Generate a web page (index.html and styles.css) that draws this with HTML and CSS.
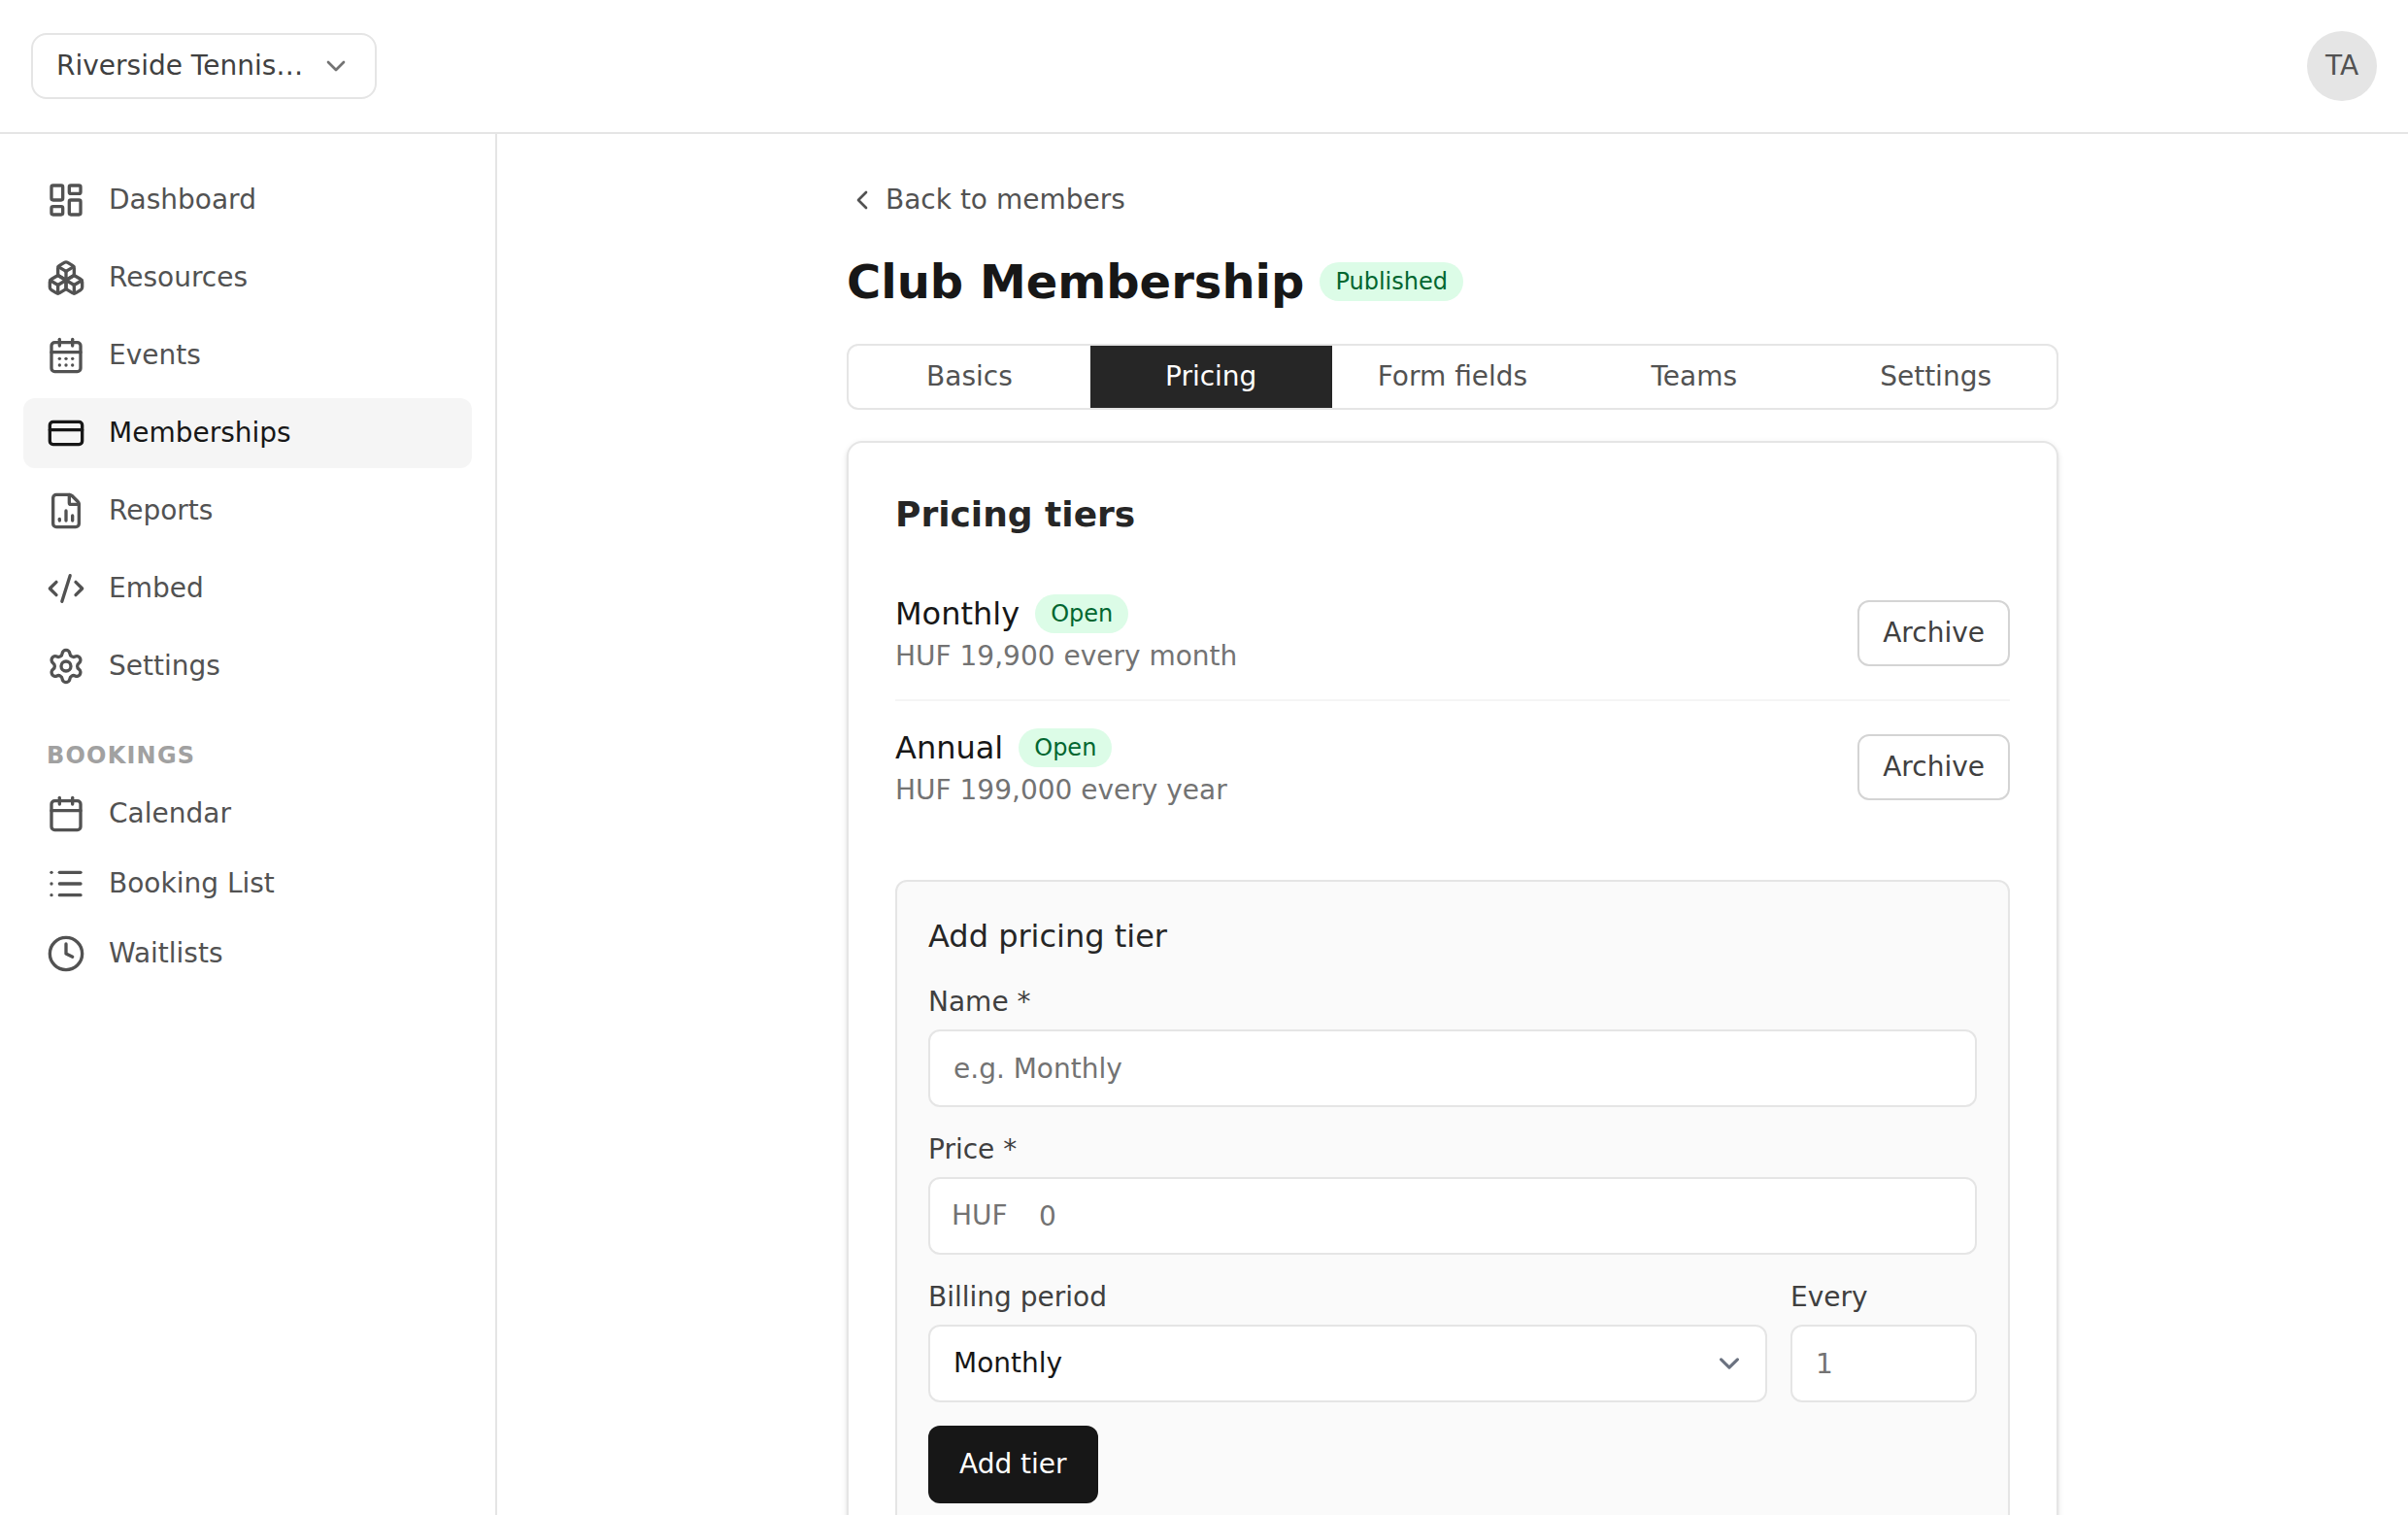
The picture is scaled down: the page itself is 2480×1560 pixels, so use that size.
FILE: index.html
```html
<!DOCTYPE html>
<html lang="en">
<head>
    <meta charset="UTF-8">
    <meta name="viewport" content="width=device-width, initial-scale=1.0">
    <title>Club Membership</title>
    <link rel="stylesheet" href="styles.css">
</head>
<body>
    <header class="topbar">
        <button type="button" class="org-switcher">
            <span class="org-name">Riverside Tennis…</span>
            <svg class="icon icon-sm" viewBox="0 0 24 24" aria-hidden="true"><path d="m6 9 6 6 6-6"/></svg>
        </button>
        <button type="button" class="avatar">TA</button>
    </header>

    <div class="layout">
        <aside class="sidebar">
            <nav class="nav">
                <a href="#" class="nav-item">
                    <svg class="icon" viewBox="0 0 24 24" aria-hidden="true"><rect width="7" height="9" x="3" y="3" rx="1"/><rect width="7" height="5" x="14" y="3" rx="1"/><rect width="7" height="9" x="14" y="12" rx="1"/><rect width="7" height="5" x="3" y="16" rx="1"/></svg>
                    Dashboard
                </a>
                <a href="#" class="nav-item">
                    <svg class="icon" viewBox="0 0 24 24" aria-hidden="true"><path d="M2.97 12.92A2 2 0 0 0 2 14.63v3.24a2 2 0 0 0 .97 1.71l3 1.8a2 2 0 0 0 2.06 0L12 19v-5.5l-5-3-4.03 2.42Z"/><path d="m7 16.5-4.74-2.85"/><path d="m7 16.5 5-3"/><path d="M7 16.5v5.17"/><path d="M12 13.5V19l3.97 2.38a2 2 0 0 0 2.06 0l3-1.8a2 2 0 0 0 .97-1.71v-3.24a2 2 0 0 0-.97-1.71L17 10.5l-5 3Z"/><path d="m17 16.5-5-3"/><path d="m17 16.5 4.74-2.85"/><path d="M17 16.5v5.17"/><path d="M7.97 4.42A2 2 0 0 0 7 6.13v4.37l5 3 5-3V6.13a2 2 0 0 0-.97-1.71l-3-1.8a2 2 0 0 0-2.06 0l-3 1.8Z"/><path d="M12 8 7.26 5.15"/><path d="m12 8 4.74-2.85"/><path d="M12 13.5V8"/></svg>
                    Resources
                </a>
                <a href="#" class="nav-item">
                    <svg class="icon" viewBox="0 0 24 24" aria-hidden="true"><path d="M8 2v4"/><path d="M16 2v4"/><rect width="18" height="18" x="3" y="4" rx="2"/><path d="M3 10h18"/><path d="M8 14h.01"/><path d="M12 14h.01"/><path d="M16 14h.01"/><path d="M8 18h.01"/><path d="M12 18h.01"/><path d="M16 18h.01"/></svg>
                    Events
                </a>
                <a href="#" class="nav-item active" aria-current="page">
                    <svg class="icon" viewBox="0 0 24 24" aria-hidden="true"><rect width="20" height="14" x="2" y="5" rx="2"/><path d="M2 10h20"/></svg>
                    Memberships
                </a>
                <a href="#" class="nav-item">
                    <svg class="icon" viewBox="0 0 24 24" aria-hidden="true"><path d="M6 22a2 2 0 0 1-2-2V4a2 2 0 0 1 2-2h8a2.4 2.4 0 0 1 1.704.706l3.588 3.588A2.4 2.4 0 0 1 20 8v12a2 2 0 0 1-2 2z"/><path d="M14 2v5a1 1 0 0 0 1 1h5"/><path d="M8 18v-1"/><path d="M12 18v-6"/><path d="M16 18v-3"/></svg>
                    Reports
                </a>
                <a href="#" class="nav-item">
                    <svg class="icon" viewBox="0 0 24 24" aria-hidden="true"><path d="m18 16 4-4-4-4"/><path d="m6 8-4 4 4 4"/><path d="m14.5 4-5 16"/></svg>
                    Embed
                </a>
                <a href="#" class="nav-item">
                    <svg class="icon" viewBox="0 0 24 24" aria-hidden="true"><path d="M9.671 4.136a2.34 2.34 0 0 1 4.659 0 2.34 2.34 0 0 0 3.319 1.915 2.34 2.34 0 0 1 2.33 4.033 2.34 2.34 0 0 0 0 3.831 2.34 2.34 0 0 1-2.33 4.033 2.34 2.34 0 0 0-3.319 1.915 2.34 2.34 0 0 1-4.659 0 2.34 2.34 0 0 0-3.32-1.915 2.34 2.34 0 0 1-2.33-4.033 2.34 2.34 0 0 0 0-3.831A2.34 2.34 0 0 1 6.35 6.051a2.34 2.34 0 0 0 3.319-1.915"/><circle cx="12" cy="12" r="3"/></svg>
                    Settings
                </a>
            </nav>

            <h3 class="nav-heading">Bookings</h3>
            <nav class="nav nav-tight">
                <a href="#" class="nav-item">
                    <svg class="icon" viewBox="0 0 24 24" aria-hidden="true"><path d="M8 2v4"/><path d="M16 2v4"/><rect width="18" height="18" x="3" y="4" rx="2"/><path d="M3 10h18"/></svg>
                    Calendar
                </a>
                <a href="#" class="nav-item">
                    <svg class="icon" viewBox="0 0 24 24" aria-hidden="true"><path d="M3 5h.01"/><path d="M3 12h.01"/><path d="M3 19h.01"/><path d="M8 5h13"/><path d="M8 12h13"/><path d="M8 19h13"/></svg>
                    Booking List
                </a>
                <a href="#" class="nav-item">
                    <svg class="icon" viewBox="0 0 24 24" aria-hidden="true"><circle cx="12" cy="12" r="10"/><path d="M12 6v6l4 2"/></svg>
                    Waitlists
                </a>
            </nav>
        </aside>

        <main class="main">
            <div class="content">
                <a href="#" class="back-link">
                    <svg class="icon icon-sm" viewBox="0 0 24 24" aria-hidden="true"><path d="m15 18-6-6 6-6"/></svg>
                    Back to members
                </a>

                <div class="page-title">
                    <h1>Club Membership</h1>
                    <span class="badge">Published</span>
                </div>

                <nav class="tabs">
                    <a href="#" class="tab">Basics</a>
                    <a href="#" class="tab active" aria-current="page">Pricing</a>
                    <a href="#" class="tab">Form fields</a>
                    <a href="#" class="tab">Teams</a>
                    <a href="#" class="tab">Settings</a>
                </nav>

                <section class="card">
                    <h2>Pricing tiers</h2>

                    <ul class="tier-list">
                        <li class="tier">
                            <div>
                                <div class="tier-name">Monthly <span class="badge">Open</span></div>
                                <div class="tier-price">HUF 19,900 every month</div>
                            </div>
                            <button type="button" class="btn btn-outline">Archive</button>
                        </li>
                        <li class="tier">
                            <div>
                                <div class="tier-name">Annual <span class="badge">Open</span></div>
                                <div class="tier-price">HUF 199,000 every year</div>
                            </div>
                            <button type="button" class="btn btn-outline">Archive</button>
                        </li>
                    </ul>

                    <form class="tier-form">
                        <h3>Add pricing tier</h3>
                        <div class="field">
                            <label for="tier-name">Name *</label>
                            <input type="text" id="tier-name" class="control" placeholder="e.g. Monthly">
                        </div>
                        <div class="field">
                            <label for="tier-price">Price *</label>
                            <div class="price-input">
                                <span class="currency">HUF</span>
                                <input type="text" inputmode="numeric" id="tier-price" class="control" placeholder="0">
                            </div>
                        </div>
                        <div class="field-row">
                            <div class="field">
                                <label for="tier-period">Billing period</label>
                                <select id="tier-period" class="control">
                                    <option>Monthly</option>
                                </select>
                            </div>
                            <div class="field field-every">
                                <label for="tier-every">Every</label>
                                <input type="text" inputmode="numeric" id="tier-every" class="control" placeholder="1">
                            </div>
                        </div>
                        <button type="submit" class="btn btn-primary">Add tier</button>
                    </form>
                </section>
            </div>
        </main>
    </div>
</body>
</html>
```
FILE: styles.css
```css
* {
    box-sizing: border-box;
}
body {
    font-family: "DejaVu Sans", sans-serif;
    font-size: 28px;
    line-height: 40px;
    margin: 0;
    min-height: 100vh;
    display: flex;
    flex-direction: column;
    background: #fff;
    color: #171717;
}
h1, h2, h3, ul {
    margin: 0;
    padding: 0;
}
a {
    color: inherit;
    text-decoration: none;
}
button, input, select {
    font: inherit;
    color: inherit;
    margin: 0;
}
button {
    cursor: pointer;
}
.icon {
    width: 40px;
    height: 40px;
    flex-shrink: 0;
    fill: none;
    stroke: currentColor;
    stroke-width: 2;
    stroke-linecap: round;
    stroke-linejoin: round;
}
.icon-sm {
    width: 32px;
    height: 32px;
}

/* Top bar */
.topbar {
    display: flex;
    justify-content: space-between;
    align-items: center;
    padding: 32px;
    border-bottom: 2px solid #e5e5e5;
}
.org-switcher {
    display: flex;
    align-items: center;
    gap: 16px;
    padding: 12px 24px;
    background: #fff;
    border: 2px solid #e5e5e5;
    border-radius: 16px;
    color: #404040;
}
.org-switcher .icon {
    color: #737373;
}
.org-name {
    min-width: 256px;
    text-align: left;
    white-space: nowrap;
}
.avatar {
    width: 72px;
    height: 72px;
    padding: 0;
    border: 0;
    border-radius: 50%;
    background: #e5e5e5;
    color: #525252;
}

/* Sidebar */
.layout {
    display: flex;
    flex: 1;
}
.sidebar {
    width: 512px;
    flex-shrink: 0;
    padding: 32px 24px;
    border-right: 2px solid #e5e5e5;
}
.nav {
    display: flex;
    flex-direction: column;
    gap: 8px;
}
.nav-tight {
    gap: 0;
}
.nav-item {
    display: flex;
    align-items: center;
    gap: 24px;
    padding: 16px 24px;
    border-radius: 12px;
    color: #525252;
}
.nav-item.active {
    background: #f5f5f5;
    color: #171717;
}
.nav-heading {
    margin-top: 40px;
    margin-bottom: 8px;
    padding: 0 24px;
    font-size: 24px;
    line-height: 32px;
    letter-spacing: 0.05em;
    text-transform: uppercase;
    color: #a1a1a1;
}

/* Main column */
.main {
    flex: 1;
    min-width: 0;
}
.content {
    max-width: 1344px;
    margin: 0 auto;
    padding: 48px;
}
.back-link {
    display: flex;
    align-items: center;
    gap: 8px;
    color: #525252;
}
.page-title {
    display: flex;
    align-items: center;
    gap: 16px;
    margin: 32px 0;
}
.page-title h1 {
    font-size: 48px;
    line-height: 64px;
}
.badge {
    padding: 4px 16px;
    border-radius: 20px;
    background: #dcfce7;
    color: #016630;
    font-size: 24px;
    line-height: 32px;
}
.tabs {
    display: flex;
    border: 2px solid #e5e5e5;
    border-radius: 12px;
    overflow: hidden;
}
.tab {
    flex: 1;
    padding: 12px;
    text-align: center;
    color: #525252;
}
.tab.active {
    background: #262626;
    color: #fff;
}

/* Pricing card */
.card {
    margin-top: 32px;
    padding: 48px;
    border: 2px solid #e5e5e5;
    border-radius: 16px;
    background: #fff;
    box-shadow: 0 2px 6px rgba(0,0,0,0.1), 0 2px 4px -2px rgba(0,0,0,0.1);
}
.card h2 {
    margin-bottom: 28px;
    font-size: 36px;
    line-height: 52px;
    color: #262626;
}
.tier-list {
    list-style: none;
}
.tier {
    display: flex;
    justify-content: space-between;
    align-items: center;
    padding: 24px 0;
}
.tier + .tier {
    border-top: 2px solid #f5f5f5;
}
.tier-name {
    display: flex;
    align-items: center;
    gap: 16px;
    font-size: 32px;
    line-height: 48px;
}
.tier-price {
    color: #737373;
}
.btn {
    border-radius: 12px;
}
.btn-outline {
    padding: 12px 24px;
    border: 2px solid #d4d4d4;
    background: #fff;
    color: #404040;
}
.btn-primary {
    align-self: flex-start;
    padding: 20px 32px;
    border: 0;
    background: #171717;
    color: #fff;
}

/* Add tier form */
.tier-form {
    display: flex;
    flex-direction: column;
    gap: 24px;
    margin-top: 48px;
    padding: 32px;
    border: 2px solid #e5e5e5;
    border-radius: 12px;
    background: #fafafa;
}
.tier-form h3 {
    font-size: 32px;
    font-weight: normal;
    line-height: 48px;
    color: #262626;
}
.field {
    flex: 1;
    display: flex;
    flex-direction: column;
    gap: 8px;
}
.field label {
    color: #404040;
}
.field-row {
    display: flex;
    gap: 24px;
}
.field-every {
    flex: 0 0 192px;
}
.control {
    width: 100%;
    height: 80px;
    padding: 0 24px;
    border: 2px solid #e5e5e5;
    border-radius: 12px;
    background: #fff;
}
.control::placeholder {
    color: #737373;
    opacity: 1;
}
select.control {
    appearance: none;
    background: #fff url("data:image/svg+xml,%3csvg xmlns='http://www.w3.org/2000/svg' fill='none' viewBox='0 0 20 20'%3e%3cpath stroke='%236b7280' stroke-linecap='round' stroke-linejoin='round' stroke-width='1.5' d='M6 8l4 4 4-4'/%3e%3c/svg%3e") no-repeat right 16px center / 42px 42px;
}
.price-input {
    position: relative;
}
.price-input .control {
    padding-left: 112px;
}
.currency {
    position: absolute;
    top: 20px;
    left: 24px;
    color: #737373;
}
```
